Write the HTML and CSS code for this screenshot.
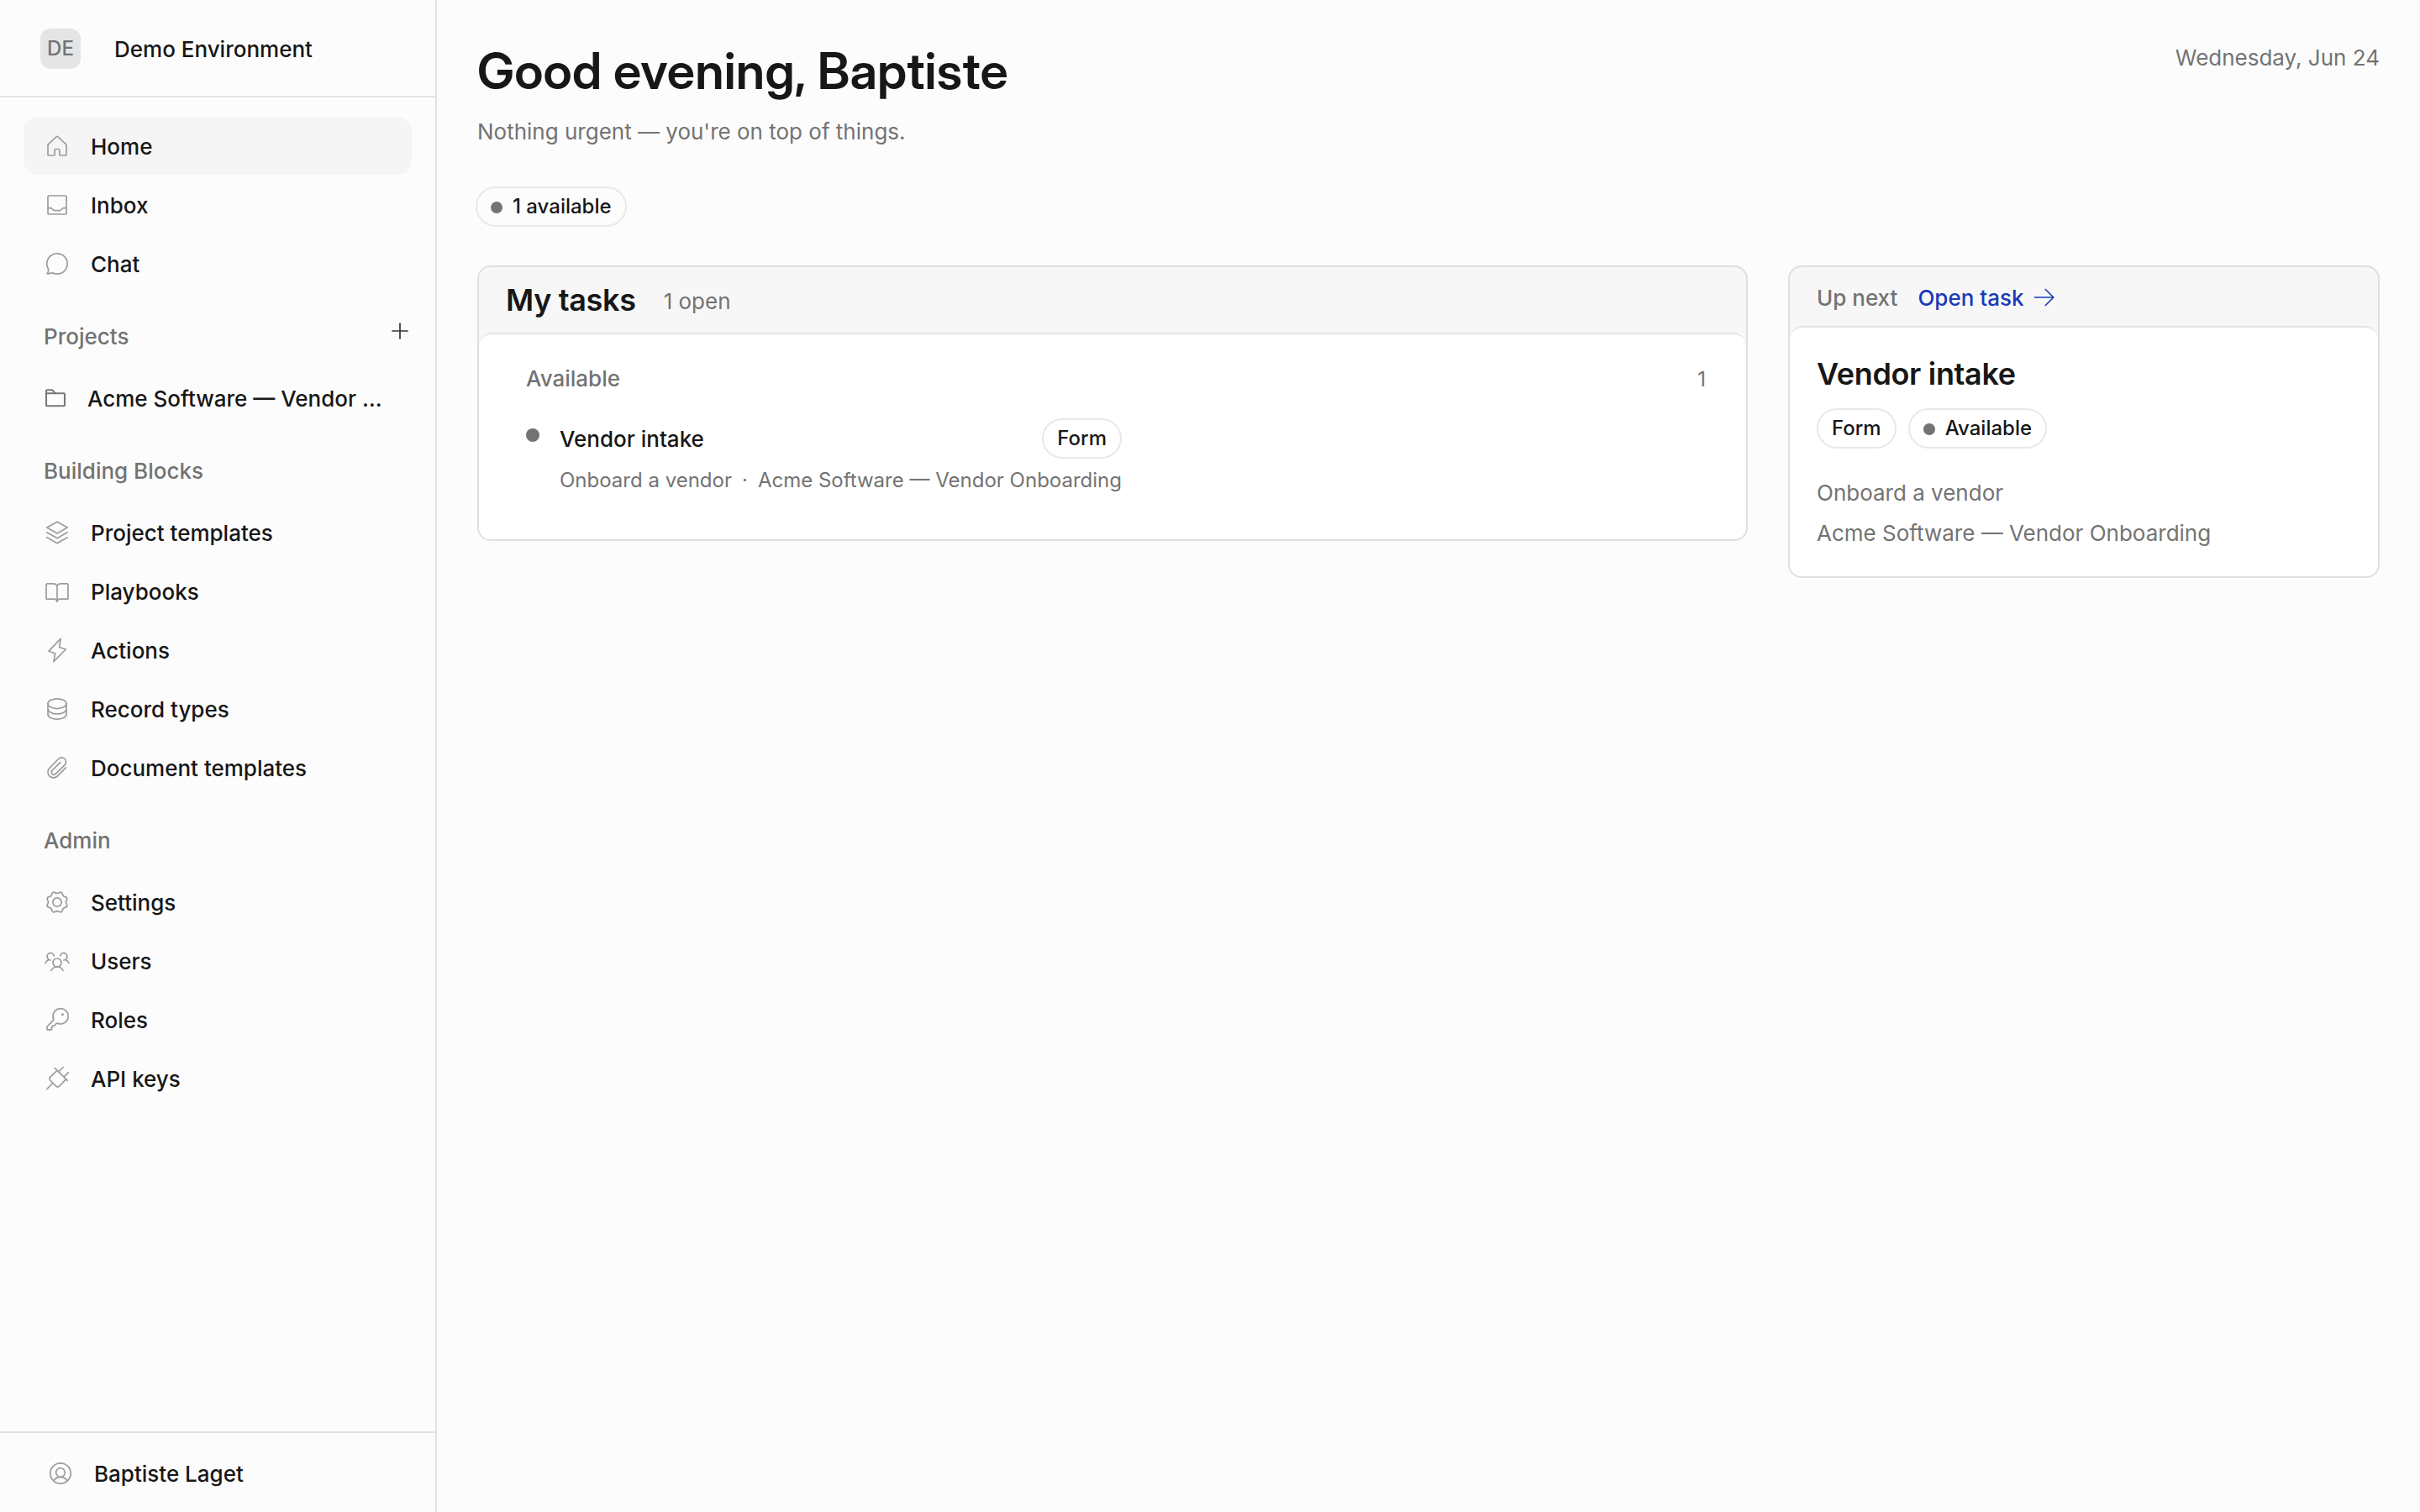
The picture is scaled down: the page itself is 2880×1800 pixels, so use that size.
FILE: index.html
```html
<!DOCTYPE html>
<html lang="en">
<head>
<meta charset="utf-8">
<title>Home</title>
<link rel="stylesheet" href="styles.css">
</head>
<body>
<div class="app">
  <aside class="sidebar">
    <header class="workspace">
      <span class="workspace-badge">DE</span>
      <span class="label">Demo Environment</span>
    </header>
    <nav class="nav">
      <ul class="nav-list">
        <li class="nav-item active"><svg class="icon" viewBox="0 0 32 32"><path d="M15.3 4.7 5.4 13.900a1.200 1.200 0 0 0-.4.9V26a1 1 0 0 0 1 1h6.100a1 1 0 0 0 1-1v-5.500a1 1 0 0 1 1-1h3.800a1 1 0 0 1 1 1V26a1 1 0 0 0 1 1H26a1 1 0 0 0 1-1V14.800a1.200 1.200 0 0 0-.4-.9L16.700 4.700a1 1 0 0 0-1.400 0z"/></svg><span class="label">Home</span></li>
        <li class="nav-item"><svg class="icon" viewBox="0 0 32 32"><rect x="5" y="5" width="22" height="22" rx="1"/><path d="M5 19.700h3.200q1 0 1.700.8l1.500 1.400q.9.800 2 .8h5.200q1.100 0 2-.8l1.500-1.400q.7-.8 1.700-.8H27"/></svg><span class="label">Inbox</span></li>
        <li class="nav-item"><svg class="icon" viewBox="0 0 32 32"><path d="M16 3.800a12.200 12.200 0 1 1 0 24.400c-1.800 0-3.500-.4-5-1.100-2-.7-4.300.9-6.800.9 1.300-2.100 2-3.600 1.300-5.800A12.200 12.200 0 0 1 16 3.800z"/></svg><span class="label">Chat</span></li>
      </ul>
      <div class="nav-label"><span class="label">Projects</span><svg class="plus" viewBox="0 0 32 32"><path d="M16 7v18M7 16h18"/></svg></div>
      <ul class="nav-list">
        <li class="nav-item project"><svg class="icon" viewBox="0 0 32 32"><path d="M5 10.500V7.200a1 1 0 0 1 1-1h5.300a2 2 0 0 1 1.500.7l2.800 3.400"/><rect x="5" y="10.300" width="22" height="15" rx="1"/></svg><span class="label">Acme Software — Vendor …</span></li>
      </ul>
      <div class="nav-label"><span class="label">Building Blocks</span></div>
      <ul class="nav-list">
        <li class="nav-item"><svg class="icon" viewBox="0 0 32 32"><path d="M16 3.200 28.200 10 16 17 3.800 10zM3.800 15.800l12.200 7 12.200-7M3.800 21.800l12.200 7 12.200-7"/></svg><span class="label">Project templates</span></li>
        <li class="nav-item"><svg class="icon" viewBox="0 0 32 32"><path d="M16 9.600Q15 6.800 11.500 6.800H4a1 1 0 0 0-1 1v16.400a1 1 0 0 0 1 1h8.500Q15.500 25.200 16 28.400 16.500 25.200 19.500 25.200H28a1 1 0 0 0 1-1V7.800a1 1 0 0 0-1-1h-7.500Q17 6.800 16 9.600zV28"/></svg><span class="label">Playbooks</span></li>
        <li class="nav-item"><svg class="icon" viewBox="0 0 32 32"><path d="M20.200 2.400 18.600 12.500 26.200 15 11.900 29.700 13.600 19.700 6 17.200z"/></svg><span class="label">Actions</span></li>
        <li class="nav-item"><svg class="icon" viewBox="0 0 32 32"><ellipse cx="16" cy="9.700" rx="11" ry="5.900"/><path d="M5 9.700v12.600c0 3.200 4.900 5.800 11 5.800s11-2.600 11-5.800V9.700M5 16c0 3.200 4.900 5.900 11 5.900S27 19.200 27 16"/></svg><span class="label">Record types</span></li>
        <li class="nav-item"><svg class="icon" viewBox="0 0 32 32"><path d="M26.400 15.800 16.400 25.900a6.700 6.700 0 0 1-9.500-9.500L17.500 5.500a4.900 4.900 0 0 1 7.600 7.100L14.400 23.200a2.900 2.900 0 0 1-4.300-4.100l9.700-9.500"/></svg><span class="label">Document templates</span></li>
      </ul>
      <div class="nav-label"><span class="label">Admin</span></div>
      <ul class="nav-list">
        <li class="nav-item"><svg class="icon" viewBox="0 0 32 32"><path transform="translate(16 16) scale(1.030)" d="M0-10.200C2-10.200 2.850-12.170 4.700-11.400 6.550-10.630 5.800-8.600 7.200-7.200 8.600-5.800 10.630-6.550 11.400-4.700 12.170-2.850 10.200-2 10.200 0 10.200 2 12.170 2.850 11.400 4.700 10.630 6.550 8.600 5.800 7.200 7.200 5.800 8.600 6.550 10.630 4.700 11.400 2.850 12.170 2 10.200 0 10.200-2 10.200-2.850 12.170-4.700 11.400-6.550 10.630-5.800 8.600-7.200 7.200-8.600 5.800-10.630 6.550-11.400 4.700-12.170 2.850-10.200 2-10.200 0-10.200-2-12.170-2.850-11.400-4.700-10.630-6.550-8.600-5.800-7.200-7.200-5.800-8.600-6.550-10.630-4.700-11.400-2.850-12.170-2-10.200 0-10.200z"/><circle cx="16" cy="16" r="5.200"/></svg><span class="label">Settings</span></li>
        <li class="nav-item"><svg class="icon" viewBox="0 0 32 32"><circle cx="16" cy="18" r="5"/><path d="M9 27.400c1.200-2.700 3.800-4.400 7-4.400s5.800 1.700 7 4.400M12.300 9.800A4.200 4.200 0 1 0 5.600 14q1 1 2.600 1M2 18.500c.8-1.700 2.100-3 3.900-3.700M19.700 9.800A4.200 4.200 0 1 1 26.400 14q-1 1-2.600 1M30 18.500c-.8-1.700-2.100-3-3.900-3.700"/></svg><span class="label">Users</span></li>
        <li class="nav-item"><svg class="icon" viewBox="0 0 32 32"><path d="M11.700 15.400A9.100 9.100 0 1 1 17 20.400c-1.600-.5-2.400.1-2.800 1.100-.3.900-.8 1.300-1.700 1.400-1.700.1-2.900.8-2.900 2.300v1.700a1 1 0 0 1-1 1H5a1 1 0 0 1-1-1v-2q0-.8.600-1.400l6.600-6.700q.9-.8.500-1.400z"/><circle class="fill" cx="22.400" cy="9.700" r="1.500"/></svg><span class="label">Roles</span></li>
        <li class="nav-item"><svg class="icon" viewBox="0 0 32 32"><path d="M13.300 3.700 28.300 18.300M17.700 8l5.500-5.500M24 14.200l5.500-5.500M16 6.300 8.200 13.800q-2.400 2.400 0 4.800l6 6q2.400 2.400 4.800 0l7.700-8M10.700 21.500 4 28.300"/></svg><span class="label">API keys</span></li>
      </ul>
    </nav>
    <footer class="account">
      <svg class="icon" viewBox="0 0 32 32"><circle cx="16" cy="16" r="12.200"/><circle cx="16" cy="15" r="5.300"/><path d="M8.300 24.200c1.500-2.400 4.400-3.900 7.700-3.900s6.200 1.500 7.700 3.900"/></svg>
      <span class="label">Baptiste Laget</span>
    </footer>
  </aside>
  <main class="main">
    <header class="page-head">
      <div>
        <h1>Good evening, Baptiste</h1>
        <p class="sub">Nothing urgent — you're on top of things.</p>
      </div>
      <time class="date">Wednesday, Jun 24</time>
    </header>
    <div class="summary"><span class="pill"><i class="dot"></i>1 available</span></div>
    <div class="columns">
      <section class="card">
        <div class="card-head"><h2>My tasks</h2><span class="count">1 open</span></div>
        <div class="card-body tasks">
          <div class="group"><span>Available</span><span class="group-count">1</span></div>
          <div class="task">
            <i class="dot large"></i>
            <div class="task-main">
              <div class="task-top"><span class="task-name label">Vendor intake</span><span class="pill">Form</span></div>
              <div class="task-meta"><span>Onboard a vendor</span><span>·</span><span>Acme Software — Vendor Onboarding</span></div>
            </div>
          </div>
        </div>
      </section>
      <section class="card">
        <div class="card-head next-head"><span class="label">Up next</span><a class="open-link"><span class="label">Open task</span><svg class="arrow" viewBox="0 0 32 32"><path d="M4.500 16H26.500M17.300 6.500 26.900 16l-9.600 9.500"/></svg></a></div>
        <div class="card-body next">
          <h2>Vendor intake</h2>
          <div class="pills"><span class="pill">Form</span><span class="pill"><i class="dot"></i>Available</span></div>
          <p>Onboard a vendor</p>
          <p>Acme Software — Vendor Onboarding</p>
        </div>
      </section>
    </div>
  </main>
</div>
</body>
</html>
```

FILE: styles.css
```css
* { box-sizing: border-box; margin: 0; padding: 0; }

body {
  font-family: Inter, "Liberation Sans", sans-serif;
  font-size: 26px;
  line-height: 40px;
  color: #171717;
  background: #fcfcfc;
}

.app { display: grid; grid-template-columns: 520px minmax(0, 1fr); height: 1800px; }

.sidebar {
  display: flex;
  flex-direction: column;
  border-right: 2px solid #e2e2e2;
  font-weight: 500;
  min-width: 0;
}

.label { padding-top: 2px; white-space: nowrap; }

.workspace {
  display: flex;
  align-items: center;
  gap: 40px;
  height: 116px;
  padding: 2px 48px 0;
  border-bottom: 2px solid #e2e2e2;
}

.workspace-badge {
  width: 48px;
  height: 48px;
  border-radius: 12px;
  background: #e5e5e5;
  color: #737373;
  font-size: 24px;
  line-height: 48px;
  text-align: center;
}

.nav { flex: 1; padding: 24px 28px; }
.nav-list { display: grid; gap: 2px; list-style: none; }

.nav-item {
  display: flex;
  align-items: center;
  gap: 24px;
  height: 68px;
  padding: 0 24px;
  border-radius: 16px;
}

.nav-item.active { background: #f5f5f5; }

.nav-item.project { gap: 22px; padding: 0 22px; }

.nav-label {
  display: flex;
  justify-content: space-between;
  height: 92px;
  padding: 31px 0 0 24px;
  color: #737373;
}

.icon, .plus, .arrow {
  flex: none;
  width: 32px;
  height: 32px;
  fill: none;
  stroke: #9c9c9c;
  stroke-width: 1.7;
  stroke-linejoin: round;
  stroke-linecap: round;
}

.icon .fill { fill: #9c9c9c; stroke: none; }
.project .icon { stroke: #787878; stroke-width: 2.1; }
.plus { margin: -1px -2px 0 0; stroke: #333; }
.arrow { stroke: #1a3ab8; }

.account {
  display: flex;
  align-items: center;
  gap: 24px;
  height: 96px;
  padding: 2px 56px 0;
  border-top: 2px solid #e2e2e2;
}

.main { padding: 48px; }

.page-head { display: flex; justify-content: space-between; }

h1 {
  font-family: "Inter Display", Inter, "Liberation Sans", sans-serif;
  font-size: 60px;
  line-height: 72px;
  font-weight: 600;
  letter-spacing: 0.18px;
}

h2 { font-size: 36px; line-height: 48px; font-weight: 600; letter-spacing: -0.34px; }

.sub { margin-top: 17px; color: #737373; }
.date { padding-top: 1px; color: #737373; }

.summary { display: flex; margin: 45px 0 46px -2px; }

.pill {
  display: inline-flex;
  align-items: center;
  height: 48px;
  padding: 0 16px;
  border: 2px solid #e8e8e8;
  border-radius: 24px;
  font-size: 24px;
  font-weight: 500;
}

.dot { width: 14px; height: 14px; border-radius: 50%; background: #737373; margin: 2px 12px 0 0; }
.dot.large { width: 16px; height: 16px; margin: 12px 24px 0 0; }

.columns { display: grid; grid-template-columns: 1512px 704px; gap: 48px; align-items: start; }

.card { border: 2px solid #dfdfdf; border-radius: 16px; background: #f7f7f7; }

.card-head { display: flex; align-items: center; gap: 33px; height: 78px; padding: 0 32px; }
.count { padding-top: 4px; color: #737373; }

.card-body { border-top: 2px solid #e4e4e4; border-radius: 16px 16px 14px 14px; background: #fff; }

.tasks { height: 246px; padding: 33px 48px 0 56px; }

.group { display: flex; justify-content: space-between; font-weight: 500; color: #737373; }
.group-count { padding-top: 1px; font-size: 24px; font-weight: 400; }

.task { display: flex; margin-top: 26px; }
.task-main { width: 669px; }
.task-top { display: flex; align-items: center; justify-content: space-between; }
.task-name { font-weight: 500; }
.task-meta { display: flex; gap: 12px; margin-top: 6px; font-size: 24px; color: #737373; white-space: nowrap; }

.next-head { height: 70px; gap: 24px; padding-top: 2px; font-weight: 500; color: #737373; }
.open-link { display: flex; align-items: center; gap: 8px; color: #1a3ab8; }

.next { height: 298px; padding: 31px 32px 0; }
.pills { display: flex; gap: 14px; margin: 17px 0 29px; }
.next p { line-height: 48px; color: #737373; }
```
